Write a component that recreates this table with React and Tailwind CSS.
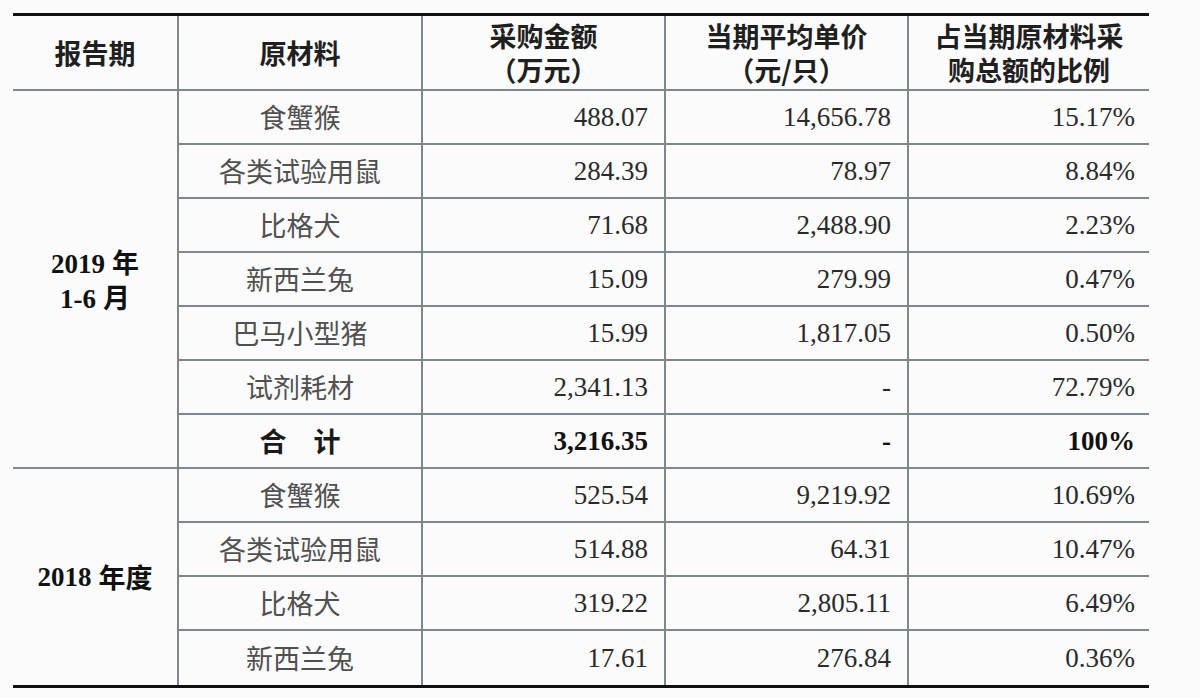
import React from "react";

const CJK = "font-['Noto_Sans_CJK_SC',sans-serif]";
const NUM = "font-['Liberation_Serif','Noto_Sans_CJK_SC',serif]";

const rows2019 = [
  ["食蟹猴", "488.07", "14,656.78", "15.17%"],
  ["各类试验用鼠", "284.39", "78.97", "8.84%"],
  ["比格犬", "71.68", "2,488.90", "2.23%"],
  ["新西兰兔", "15.09", "279.99", "0.47%"],
  ["巴马小型猪", "15.99", "1,817.05", "0.50%"],
  ["试剂耗材", "2,341.13", "-", "72.79%"],
];

const rows2018 = [
  ["食蟹猴", "525.54", "9,219.92", "10.69%"],
  ["各类试验用鼠", "514.88", "64.31", "10.47%"],
  ["比格犬", "319.22", "2,805.11", "6.49%"],
  ["新西兰兔", "17.61", "276.84", "0.36%"],
];

// 表头单元格
function HeadCell({ lines, left }) {
  return (
    <div
      className={`h-[75px] border-b-2 border-[#80878b] flex flex-col items-center justify-center text-center text-[27px] font-bold text-[#1f1f1f] ${CJK} ${left ? "border-l-2" : ""}`}
    >
      {lines.map((l) => (
        <div key={l} className="h-[34px] leading-[34px]">
          {l}
        </div>
      ))}
    </div>
  );
}

function Row({ r, last, bold }) {
  const line = last ? "" : "border-b-2";
  const w = bold ? "font-bold text-[#111]" : "text-[#2a2a2a]";
  return (
    <>
      <div
        className={`h-[54px] ${line} border-l-2 border-[#80878b] flex items-center justify-center text-[27px] ${CJK} ${bold ? "font-bold text-[#1a1a1a]" : "text-[#505050]"}`}
      >
        {r[0]}
      </div>
      <div
        className={`h-[54px] ${line} border-l-2 border-[#80878b] flex items-center justify-end pr-4 text-[27px] ${NUM} ${w}`}
      >
        {r[1]}
      </div>
      <div
        className={`h-[54px] ${line} border-l-2 border-[#80878b] flex items-center justify-end pr-4 text-[27px] ${NUM} ${w}`}
      >
        {r[2]}
      </div>
      <div
        className={`h-[54px] ${line} border-l-2 border-[#80878b] flex items-center justify-end pr-[14px] text-[27px] ${NUM} ${w}`}
      >
        {r[3]}
      </div>
    </>
  );
}

export default function App() {
  return (
    <div className="w-[1200px] h-[698px] bg-[#fbfbfc] pt-[13px] pl-[13px]">
      <div className="w-[1136px] grid grid-cols-[164px_244px_243px_243px_242px] border-t-[3px] border-b-[3px] border-t-[#111] border-b-[#111]">
        <HeadCell lines={["报告期"]} />
        <HeadCell left lines={["原材料"]} />
        <HeadCell left lines={["采购金额", "（万元）"]} />
        <HeadCell left lines={["当期平均单价", "（元/只）"]} />
        <HeadCell left lines={["占当期原材料采", "购总额的比例"]} />

        {/* 2019 年 1-6 月 */}
        <div className="row-span-7 border-b-2 border-[#80878b] flex flex-col items-center justify-center text-center text-[27px] font-bold text-[#111]">
          <div className="h-[35px] leading-[35px]">
            <span className={NUM}>2019</span> <span className={CJK}>年</span>
          </div>
          <div className="h-[35px] leading-[35px]">
            <span className={NUM}>1-6</span> <span className={CJK}>月</span>
          </div>
        </div>
        {rows2019.map((r) => (
          <Row key={r[0]} r={r} />
        ))}
        <Row r={["合　计", "3,216.35", "-", "100%"]} bold />

        {/* 2018 年度 */}
        <div className="row-span-4 flex items-center justify-center text-[27px] font-bold text-[#111]">
          <span className={NUM}>2018</span>
          <span className={`${CJK} ml-[7px]`}>年度</span>
        </div>
        {rows2018.map((r, i) => (
          <Row key={r[0]} r={r} last={i === rows2018.length - 1} />
        ))}
      </div>
    </div>
  );
}
